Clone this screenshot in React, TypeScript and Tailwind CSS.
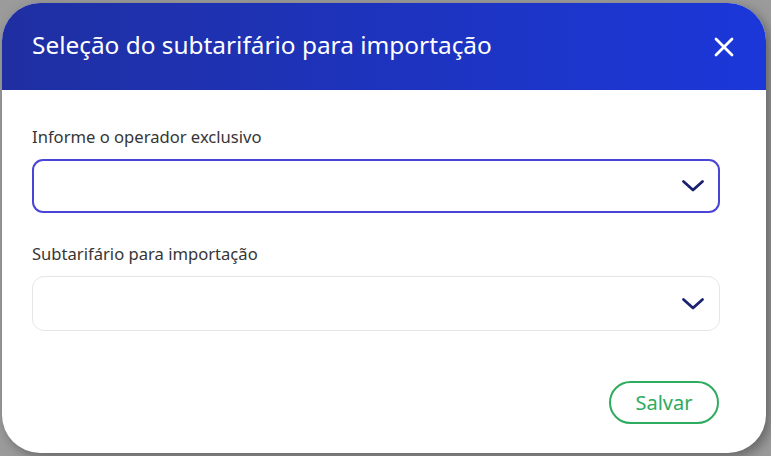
const Chevron = () => (
  <svg width="24" height="14" viewBox="0 0 24 14" fill="none" className="text-[#1a2170]">
    <path d="M2.5 2.5 L12 11 L21.5 2.5" stroke="currentColor" strokeWidth="2.8" strokeLinecap="round" strokeLinejoin="round" />
  </svg>
);

const SelectField = ({ label, focused }: { label: string; focused?: boolean }) => (
  <div className="flex flex-col">
    <label className="text-[16.6px] leading-[20px] text-[#363636] mb-[12px]">{label}</label>
    <button
      className={
        focused
          ? "h-[54px] w-full rounded-[11px] border-2 border-[#4b45d6] bg-white flex items-center justify-end pr-[13px]"
          : "h-[55px] w-full rounded-[12px] border border-[#e6e6e6] bg-white flex items-center justify-end pr-[14px]"
      }
    >
      <Chevron />
    </button>
  </div>
);

export default function App() {
  return (
    <div
      className="h-[456px] w-full bg-[#9b9b9b] pt-[3px] pl-[2px] pr-[5px] pb-[3px]"
      style={{ fontFamily: '"Noto Sans", "Open Sans", sans-serif' }}
    >
      <div className="h-[450px] w-[764px] bg-white rounded-[38px] overflow-hidden flex flex-col shadow-[4px_4px_12px_rgba(0,0,0,0.35)]">
        {/* Header */}
        <div className="h-[87px] shrink-0 bg-gradient-to-r from-[#1f2fa2] to-[#1b37d9] flex items-center justify-between pl-[30px] pr-[32px]">
          <h2 className="text-[24.4px] text-white leading-none pb-[2px]">
            Seleção do subtarifário para importação
          </h2>
          <svg width="20" height="20" viewBox="0 0 20 20" fill="none">
            <path d="M2 2 L18 18 M18 2 L2 18" stroke="white" strokeWidth="2.8" strokeLinecap="round" />
          </svg>
        </div>

        {/* Body */}
        <div className="flex flex-col px-[30px] pt-[37px] gap-[31px] pr-[46px]">
          <SelectField label="Informe o operador exclusivo" focused />
          <SelectField label="Subtarifário para importação" />
        </div>

        <div className="flex justify-end pr-[47px] mt-[50px]">
          <button className="h-[43px] w-[110px] rounded-full border-2 border-[#2dab5e] text-[#2dab5e] text-[20px] leading-none">
            Salvar
          </button>
        </div>
      </div>
    </div>
  );
}
